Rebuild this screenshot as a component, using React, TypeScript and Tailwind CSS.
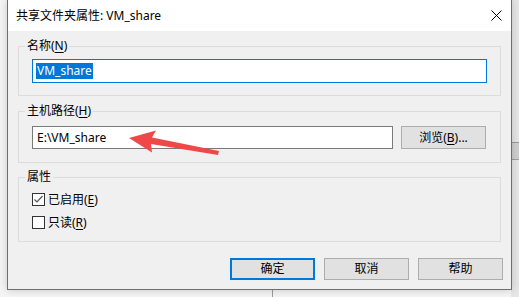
const font = { fontFamily: '"Noto Sans", "Noto Sans CJK SC", sans-serif' };

function U({ c }: { c: string }) {
  return <span className="underline underline-offset-2 decoration-1">{c}</span>;
}

function Check({ on }: { on: boolean }) {
  return (
    <div className="w-[13px] h-[13px] border border-[#333] bg-white flex items-center justify-center">
      {on && (
        <svg width="11" height="11" viewBox="0 0 11 11">
          <polyline points="1.5,5.5 4,8 9.5,2" fill="none" stroke="#555" strokeWidth="1.2" />
        </svg>
      )}
    </div>
  );
}

export default function App() {
  return (
    <div
      className="relative w-[519px] h-[297px] bg-[#f4f4f4] overflow-hidden text-[12px] text-black"
      style={font}
    >
      {/* background window behind dialog */}
      <div className="absolute right-0 top-0 w-[8px] h-[297px] bg-[#e6e6e6]">
        <div className="h-[143px] border-b border-[#9a9a9a]" />
        <div className="h-[17px] bg-[#cfcfcf] border-b border-[#a0a0a0]" />
      </div>
      <div className="absolute left-[272px] top-[290px] w-px h-[7px] bg-[#9a9a9a]" />

      {/* Dialog */}
      <div className="relative ml-[7px] w-[505px] h-[290px] flex flex-col bg-[#f0f0f0] border-x border-b border-[#6e6e6e] shadow-[0_0_8px_rgba(0,0,0,0.18)]">
        {/* Title bar */}
        <div className="h-[31px] bg-white flex items-center justify-between pl-[8px] pr-[9px]">
          <span className="leading-[16px]">共享文件夹属性: VM_share</span>
          <svg width="11" height="11" viewBox="0 0 11 11">
            <path d="M0.5 0.5 L10.5 10.5 M10.5 0.5 L0.5 10.5" stroke="#000" strokeWidth="1" />
          </svg>
        </div>

        {/* 名称 */}
        <fieldset className="mx-[10px] mt-[7px] border border-[#dcdcdc] px-[13px] pt-[5px] pb-[12px]">
          <legend className="-ml-[7px] px-[2px] leading-[16px]">
            名称(<U c="N" />)
          </legend>
          <div className="h-[24px] border border-[#0078d7] bg-white flex items-center pl-[3px]">
            <span className="bg-[#0078d7] text-white leading-[16px] px-[1px]">VM_share</span>
          </div>
        </fieldset>

        {/* 主机路径 */}
        <fieldset className="mx-[10px] mt-[7px] border border-[#dcdcdc] pl-[13px] pr-[14px] pt-[7px] pb-[13px]">
          <legend className="-ml-[7px] px-[2px] leading-[16px]">
            主机路径(<U c="H" />)
          </legend>
          <div className="flex gap-[8px]">
            <div className="flex-1 h-[23px] border border-[#7a7a7a] bg-white flex items-center pl-[4px]">
              E:\VM_share
            </div>
            <button className="w-[85px] h-[23px] border border-[#adadad] bg-[#e1e1e1] flex items-center justify-center">
              浏览(<U c="B" />)...
            </button>
          </div>
        </fieldset>

        {/* 属性 */}
        <fieldset className="mx-[10px] mt-[6px] border border-[#dcdcdc] px-[13px] pt-[6px] pb-[10px] flex flex-col gap-[6px]">
          <legend className="-ml-[7px] px-[2px] leading-[16px]">属性</legend>
          <div className="h-[17px] flex items-center gap-[3px]">
            <Check on />
            <span>
              已启用(<U c="E" />)
            </span>
          </div>
          <div className="h-[17px] flex items-center gap-[3px]">
            <Check on={false} />
            <span>
              只读(<U c="R" />)
            </span>
          </div>
        </fieldset>

        {/* Buttons */}
        <div className="mt-[16px] flex justify-end gap-[9px] pr-[8px]">
          <button className="w-[85px] h-[22px] border-2 border-[#0078d7] bg-[#e1e1e1] flex items-center justify-center">
            确定
          </button>
          <button className="w-[85px] h-[22px] border border-[#adadad] bg-[#e1e1e1] flex items-center justify-center">
            取消
          </button>
          <button className="w-[85px] h-[22px] border border-[#adadad] bg-[#e1e1e1] flex items-center justify-center">
            帮助
          </button>
        </div>
      </div>

      {/* red annotation arrow */}
      <svg className="absolute left-0 top-0" width="519" height="297" viewBox="0 0 519 297">
        <polygon
          points="129,138 156,130.5 152,137.5 219,151 218,155 151,144 152,152.5"
          fill="#f04848"
        />
      </svg>
    </div>
  );
}
